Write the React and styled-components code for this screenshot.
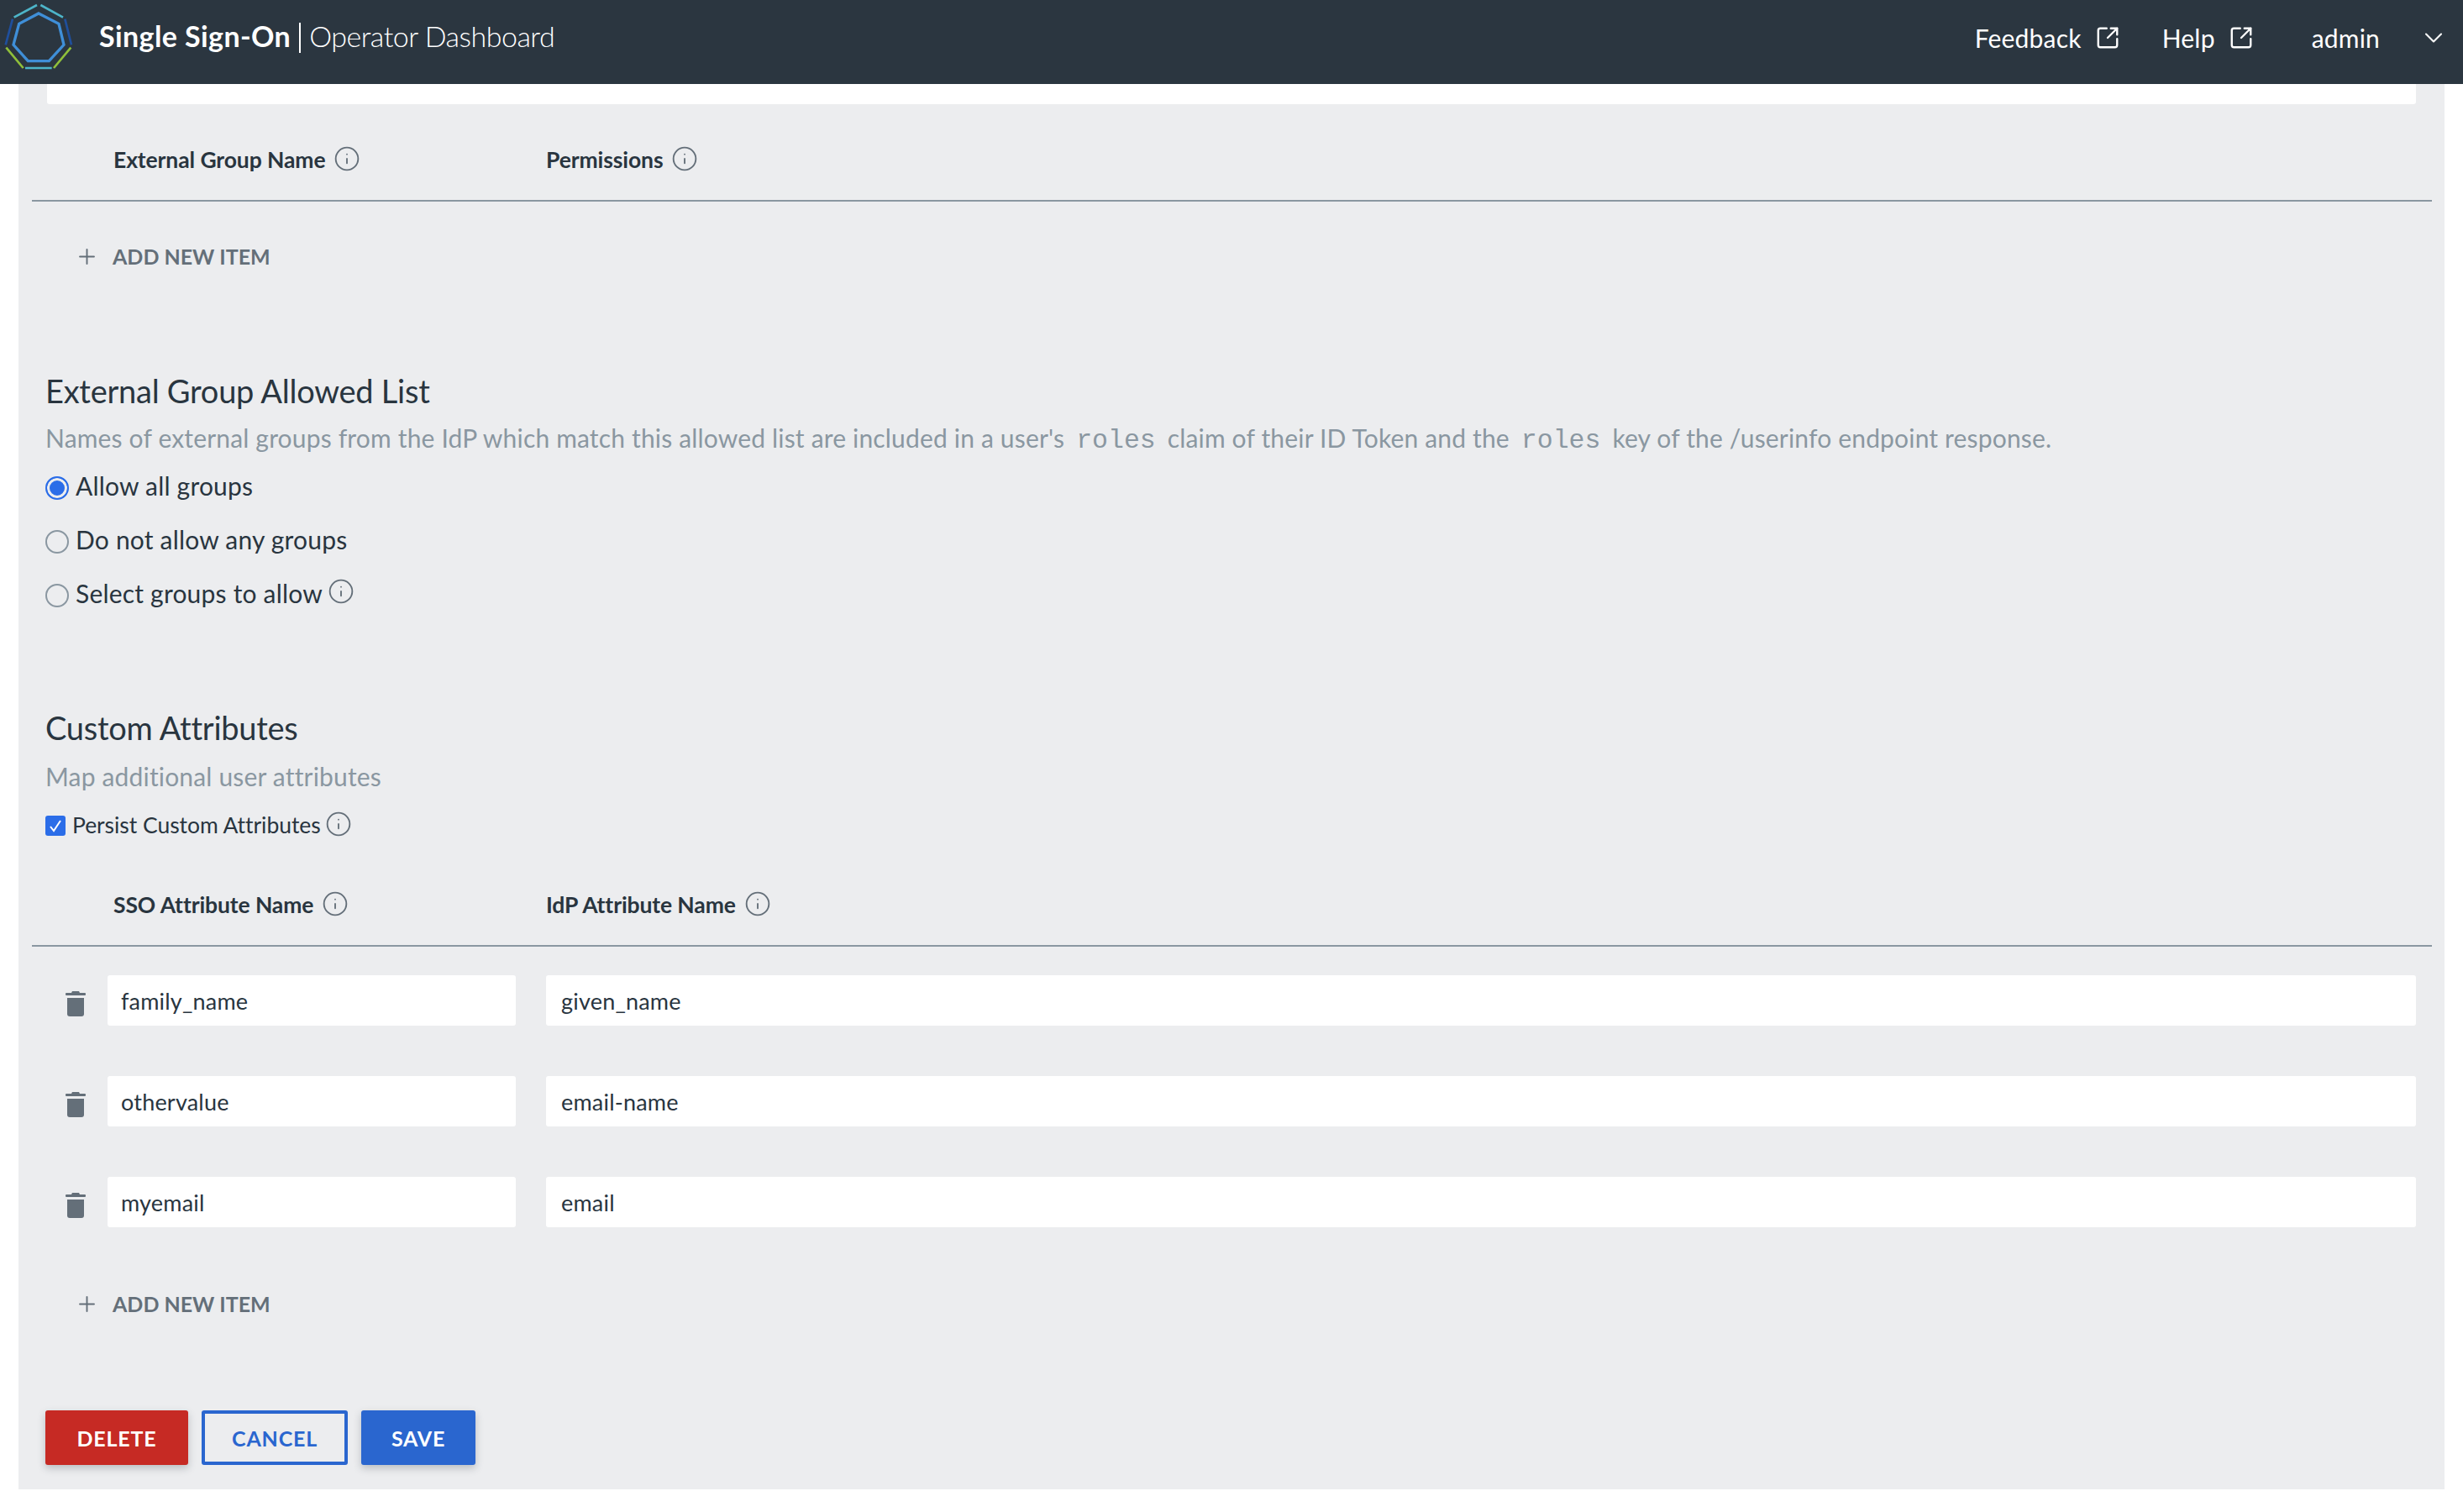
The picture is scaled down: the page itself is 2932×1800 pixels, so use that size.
import React from 'react';
import styled, { createGlobalStyle } from 'styled-components';
import { ChevronDown, Info, Plus, SquareArrowOutUpRight } from 'lucide-react';

const FONT = '"Lato", "Liberation Sans", sans-serif';

const GlobalStyle = createGlobalStyle`
  html, body {
    margin: 0;
    padding: 0;
    background: #fff;
    font-family: ${FONT};
    color: #29353f;
  }
  * { box-sizing: border-box; }
`;

const Page = styled.div`
  width: 2932px;
  height: 1800px;
  overflow: hidden;
`;

const TopBar = styled.header`
  display: flex;
  align-items: center;
  height: 100px;
  background: #2b3640;
  color: #fff;
`;

const LogoMark = styled.svg`
  flex: none;
  width: 90px;
  height: 100px;
`;

const Brand = styled.div`
  display: flex;
  align-items: center;
  flex: 1;
  margin-left: 28px;
  padding-bottom: 15px;
  font-size: 34px;

  b {
    font-weight: 700;
    letter-spacing: 0.4px;
  }
`;

const BrandRule = styled.span`
  width: 2px;
  height: 36px;
  margin: 4px 10px 0;
  background: #fff;
`;

const BrandLight = styled.span`
  font-weight: 300;
  letter-spacing: -0.5px;
`;

const TopLink = styled.a`
  display: flex;
  align-items: center;
  gap: 16px;
  height: 50px;
  margin-right: ${({ $gap }) => $gap}px;
  margin-bottom: 10px;
  font-size: 30px;
  line-height: 40px;
  letter-spacing: 0.2px;
  color: #fff;
`;

const LinkIcon = styled(SquareArrowOutUpRight)`
  width: 30px;
  height: 30px;
  stroke-width: 1.9;
`;

const MenuChevron = styled(ChevronDown)`
  width: 36px;
  height: 36px;
  margin-left: 30px;
  stroke-width: 1.4;
`;

const Panel = styled.main`
  height: 1673px;
  margin: 0 22px;
  padding: 0 34px 0 32px;
  background: #ecedef;
`;

const ClippedField = styled.div`
  height: 24px;
  margin-left: 2px;
  background: #fff;
  border-radius: 0 0 3px 3px;
`;

const Table = styled.div`
  margin: 0 -19px 0 -16px;
`;

const ColumnRow = styled.div`
  display: grid;
  grid-template-columns: 90px 486px 1fr;
  align-items: end;
  height: ${({ $height }) => $height}px;
  border-bottom: 2px solid #8a97a1;
`;

const ColumnTitle = styled.div`
  display: flex;
  align-items: center;
  gap: 10px;
  grid-column: ${({ $first }) => ($first ? '1 / span 2' : '3')};
  padding: 0 0 30px ${({ $first }) => ($first ? 97 : 36)}px;
  font-size: 26.5px;
  font-weight: 700;
  line-height: 36px;
  letter-spacing: -0.1px;
`;

const HelpIcon = styled(Info)`
  flex: none;
  width: 32px;
  height: 32px;
  margin: ${({ $lift }) => $lift || 0}px 0 0 ${({ $gap }) => $gap || 0}px;
  color: #646f79;
  stroke-width: 1.4;
`;

const AddItem = styled.button`
  display: flex;
  align-items: center;
  height: 40px;
  margin: ${({ $top }) => $top}px 0 0 51px;
  padding: 0;
  background: none;
  border: 0;
  font: 700 25px ${FONT};
  color: #646f79;

  svg {
    width: 29px;
    height: 29px;
    margin-right: 16px;
    stroke-width: 1.6;
  }
`;

const Heading = styled.h2`
  margin: ${({ $top }) => $top}px 0 0;
  font-size: 38px;
  font-weight: 400;
  line-height: 50px;
  letter-spacing: -0.25px;
`;

const Description = styled.p`
  margin: ${({ $top }) => $top}px 0 0;
  font-size: 30px;
  line-height: 50px;
  letter-spacing: 0.17px;
  color: #8a97a1;

  code {
    margin: 0 14px;
    font-family: "Liberation Mono", monospace;
    font-size: 31.5px;
    letter-spacing: 0;
  }
`;

const RadioList = styled.div`
  display: flex;
  flex-direction: column;
  gap: 24px;
  margin-top: 8px;
`;

const RadioRow = styled.label`
  display: flex;
  align-items: center;
  height: 40px;
  font-size: 30px;
  letter-spacing: 0.2px;
`;

const RadioDot = styled.input.attrs({ type: 'radio' })`
  appearance: none;
  width: 28px;
  height: 28px;
  margin: 6px 8px 0 0;
  border-radius: 50%;
  background: ${({ checked }) => (checked ? '#2b6de8' : 'transparent')};
  border: 2px solid ${({ checked }) => (checked ? '#2b6de8' : '#8a97a1')};
  box-shadow: ${({ checked }) => (checked ? 'inset 0 0 0 3px #ecedef' : 'none')};
`;

const CheckRow = styled.label`
  display: flex;
  align-items: center;
  height: 40px;
  margin-top: 13px;
  font-size: 26.5px;
  letter-spacing: -0.05px;
`;

const CheckBox = styled.span`
  display: flex;
  align-items: center;
  justify-content: center;
  width: 24px;
  height: 24px;
  margin: 2px 8px 0 0;
  border-radius: 3px;
  background: #2b6de8;
`;

const Row = styled.div`
  display: grid;
  grid-template-columns: 90px 486px 1fr;
  align-items: center;
  height: 60px;
  margin: ${({ $top }) => $top}px 19px 0 0;
`;

const Trash = styled.svg`
  width: 24px;
  height: 30px;
  margin: 8px 0 0 40px;
  fill: #646f79;
`;

const FieldCell = styled.div`
  padding-left: ${({ $right }) => ($right ? 36 : 0)}px;
`;

const Field = styled.input`
  display: block;
  width: 100%;
  height: 60px;
  padding: 0 17px 0 ${({ $right }) => ($right ? 18 : 16)}px;
  background: #fff;
  border: 0;
  border-radius: 3px;
  font: 400 27px ${FONT};
  letter-spacing: 0.2px;
  color: #29353f;
`;

const Actions = styled.div`
  display: flex;
  gap: 16px;
  margin-top: 107px;
`;

const ActionButton = styled.button`
  width: ${({ $width }) => $width}px;
  height: 65px;
  padding: 0;
  border-radius: 3px;
  font: 700 25px ${FONT};
  letter-spacing: 0.8px;
  color: ${({ $variant }) => ($variant === 'outline' ? '#2a66cf' : '#fff')};
  background: ${({ $variant }) =>
    $variant === 'danger' ? '#c62a24' : $variant === 'primary' ? '#2a66cf' : 'transparent'};
  border: ${({ $variant }) => ($variant === 'outline' ? '4px solid #2a66cf' : '0')};
  box-shadow: ${({ $variant }) => ($variant === 'outline' ? 'none' : '0 4px 10px rgba(41, 53, 63, 0.25)')};
`;

const Logo = () => (
  <LogoMark viewBox="0 0 270 300" fill="none" strokeWidth="8">
    <polygon points="138,48 210,85 228,160 175,218 100,218 48,160 68,85" stroke="#3f8fd8" strokeWidth="10" />
    <path d="M50 62L132 18M145 18L225 62M90 243H185" stroke="#4db5c9" />
    <path d="M232 68L255 160M45 68L20 160" stroke="#1f4f9c" />
    <path d="M253 170L192 243M22 170L83 243" stroke="#8fbf3a" />
  </LogoMark>
);

const TrashIcon = () => (
  <Trash viewBox="0 0 24 30">
    <path d="M8 0h8l1 2h6a1 1 0 0 1 1 1v1a1 1 0 0 1-1 1H1a1 1 0 0 1-1-1V3a1 1 0 0 1 1-1h6z" />
    <path d="M2 8h20v19a3 3 0 0 1-3 3H5a3 3 0 0 1-3-3z" />
  </Trash>
);

const attributes = [
  ['family_name', 'given_name'],
  ['othervalue', 'email-name'],
  ['myemail', 'email'],
];

const App = () => (
  <Page>
    <GlobalStyle />
    <TopBar>
      <Logo />
      <Brand>
        <b>Single Sign-On</b>
        <BrandRule />
        <BrandLight>Operator Dashboard</BrandLight>
      </Brand>
      <TopLink $gap={50}>
        Feedback <LinkIcon />
      </TopLink>
      <TopLink $gap={69}>
        Help <LinkIcon />
      </TopLink>
      <TopLink $gap={17}>
        admin <MenuChevron />
      </TopLink>
    </TopBar>

    <Panel>
      <ClippedField />
      <Table>
        <ColumnRow $height={116}>
          <ColumnTitle $first>
            External Group Name <HelpIcon $lift={-2} />
          </ColumnTitle>
          <ColumnTitle>
            Permissions <HelpIcon $lift={-2} />
          </ColumnTitle>
        </ColumnRow>
        <AddItem $top={45}>
          <Plus />
          ADD NEW ITEM
        </AddItem>
      </Table>

      <Heading $top={115}>External Group Allowed List</Heading>
      <Description $top={6}>
        Names of external groups from the IdP which match this allowed list are included in a user's
        <code>roles</code>
        claim of their ID Token and the
        <code>roles</code>
        key of the /userinfo endpoint response.
      </Description>
      <RadioList>
        <RadioRow>
          <RadioDot name="groups" checked readOnly />
          Allow all groups
        </RadioRow>
        <RadioRow>
          <RadioDot name="groups" readOnly />
          Do not allow any groups
        </RadioRow>
        <RadioRow>
          <RadioDot name="groups" readOnly />
          Select groups to allow
          <HelpIcon $lift={-4} $gap={6} />
        </RadioRow>
      </RadioList>

      <Heading $top={115}>Custom Attributes</Heading>
      <Description $top={8}>Map additional user attributes</Description>
      <CheckRow>
        <CheckBox>
          <svg width="18" height="18" viewBox="0 0 18 18" fill="none" stroke="#fff" strokeWidth="2">
            <path d="M3 10l4 5 8-12" />
          </svg>
        </CheckBox>
        Persist Custom Attributes
        <HelpIcon $lift={-2} $gap={5} />
      </CheckRow>

      <Table>
        <ColumnRow $height={125}>
          <ColumnTitle $first>
            SSO Attribute Name <HelpIcon $lift={-2} />
          </ColumnTitle>
          <ColumnTitle>
            IdP Attribute Name <HelpIcon $lift={-2} />
          </ColumnTitle>
        </ColumnRow>
        {attributes.map(([sso, idp], index) => (
          <Row key={sso} $top={index === 0 ? 34 : 60}>
            <TrashIcon />
            <FieldCell>
              <Field value={sso} readOnly />
            </FieldCell>
            <FieldCell $right>
              <Field $right value={idp} readOnly />
            </FieldCell>
          </Row>
        ))}
        <AddItem $top={71}>
          <Plus />
          ADD NEW ITEM
        </AddItem>
      </Table>

      <Actions>
        <ActionButton $variant="danger" $width={170}>DELETE</ActionButton>
        <ActionButton $variant="outline" $width={174}>CANCEL</ActionButton>
        <ActionButton $variant="primary" $width={136}>SAVE</ActionButton>
      </Actions>
    </Panel>
  </Page>
);

export default App;
